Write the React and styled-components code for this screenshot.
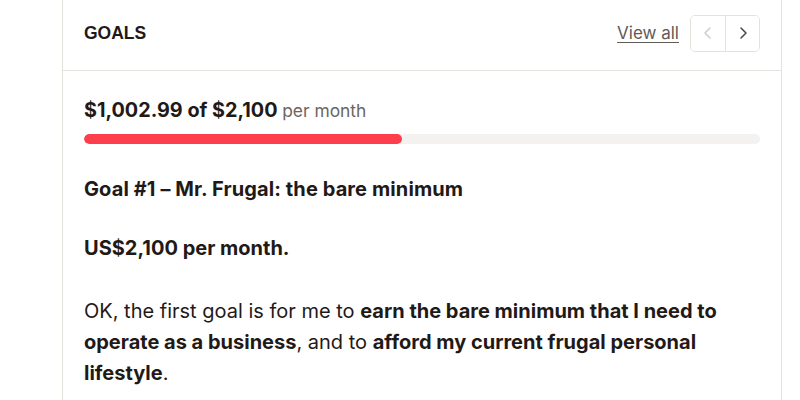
import styled, { createGlobalStyle } from "styled-components";

const GlobalStyle = createGlobalStyle`
  body {
    margin: 0;
    background: #ffffff;
    font-family: Inter, "Noto Sans", sans-serif;
    color: #1f1a17;
  }
`;

const Page = styled.div`
  padding-left: 62px;
  height: 400px;
  overflow: hidden;
`;

const Card = styled.section`
  width: 720px;
  box-sizing: border-box;
  border-left: 1px solid #e4e2dc;
  border-right: 1px solid #e4e2dc;
  min-height: 400px;
`;

const Header = styled.header`
  height: 71px;
  box-sizing: border-box;
  border-bottom: 1px solid #e4e2dc;
  display: flex;
  align-items: center;
  justify-content: space-between;
  padding: 0 21px 4px 21px;
`;

const Title = styled.h2`
  margin: 0;
  font-family: "Liberation Sans", Arial, sans-serif;
  font-size: 17.5px;
  font-weight: 700;
  color: #1f1a17;
`;

const Actions = styled.div`
  display: flex;
  align-items: center;
  gap: 11px;
`;

const ViewAll = styled.a`
  font-size: 17px;
  color: #5f5b57;
  text-decoration: underline;
  text-underline-offset: 3px;
  cursor: pointer;
`;

const Pager = styled.div`
  display: flex;
  height: 35px;
  border: 1px solid #e4e2dc;
  border-radius: 5px;
  overflow: hidden;
`;

const PagerButton = styled.button`
  width: 34px;
  border: none;
  background: #fff;
  display: flex;
  align-items: center;
  justify-content: center;
  padding: 0;
  color: ${(p) => (p.disabled ? "#cfccc6" : "#4a4542")};
  & + & {
    border-left: 1px solid #e4e2dc;
  }
`;

const Body = styled.div`
  padding: 25px 21px 0 21px;
`;

const Amount = styled.div`
  font-size: 19.8px;
  font-weight: 700;
  line-height: 28px;
  color: #1f1a17;
`;

const Per = styled.span`
  font-size: 17.4px;
  font-weight: 400;
  color: #6b6662;
`;

const Track = styled.div`
  margin-top: 9px;
  height: 10px;
  border-radius: 5px;
  background: #f3f2f0;
  overflow: hidden;
`;

const Fill = styled.div`
  height: 100%;
  border-radius: 5px;
  background: #ff3e4d;
`;

const Content = styled.div`
  padding-top: 30px;
  font-size: 20px;
  line-height: 31px;
`;

const Heading = styled.p`
  margin: 0 0 28px 0;
  font-weight: 700;
  letter-spacing: 0.1px;
`;

const Para = styled.p`
  margin: 0 0 ${(p) => (p.bold ? "32px" : "28px")} 0;
  font-weight: ${(p) => (p.bold ? 700 : 400)};
`;

const Chevron = ({ dir }) => (
  <svg width="14" height="14" viewBox="0 0 14 14" fill="none">
    <path
      d={dir === "left" ? "M9 2 L4 7 L9 12" : "M5 2 L10 7 L5 12"}
      stroke="currentColor"
      strokeWidth="1.5"
      strokeLinecap="round"
      strokeLinejoin="round"
    />
  </svg>
);

export default function App() {
  const current = 1002.99;
  const target = 2100;
  const pct = Math.floor((current / target) * 100);
  return (
    <>
      <GlobalStyle />
      <Page>
        <Card>
          <Header>
            <Title>GOALS</Title>
            <Actions>
              <ViewAll>View all</ViewAll>
              <Pager>
                <PagerButton disabled>
                  <Chevron dir="left" />
                </PagerButton>
                <PagerButton>
                  <Chevron dir="right" />
                </PagerButton>
              </Pager>
            </Actions>
          </Header>
          <Body>
            <Amount>
              $1,002.99 of $2,100 <Per>per month</Per>
            </Amount>
            <Track>
              <Fill style={{ width: `${pct}%` }} />
            </Track>
            <Content>
              <Heading>Goal #1 – Mr. Frugal: the bare minimum</Heading>
              <Para bold>US$2,100 per month.</Para>
              <Para>
                OK, the first goal is for me to{" "}
                <strong>earn the bare minimum that I need to operate as a business</strong>, and to{" "}
                <strong>afford my current frugal personal lifestyle</strong>.
              </Para>
            </Content>
          </Body>
        </Card>
      </Page>
    </>
  );
}
